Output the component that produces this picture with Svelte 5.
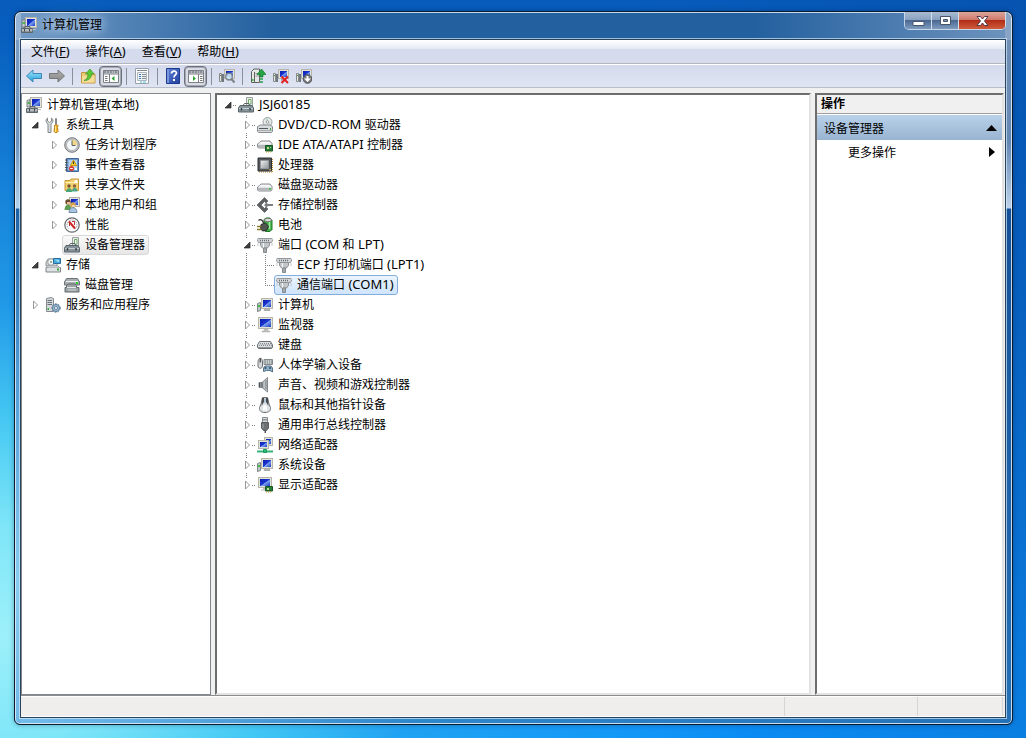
<script lang="ts">
  interface Row {
    id: string;
    label: string;
    icon: string;
    level: number;
    open?: boolean;
    last?: boolean;
  }

  let scopeRows = $state<Row[]>([
    { id: 'root', label: '计算机管理(本地)', icon: 'manage', level: 0 },
    { id: 'tools', label: '系统工具', icon: 'tools', level: 1, open: true },
    { id: 'tasks', label: '任务计划程序', icon: 'clock', level: 2, open: false },
    { id: 'events', label: '事件查看器', icon: 'events', level: 2, open: false },
    { id: 'shares', label: '共享文件夹', icon: 'shares', level: 2, open: false },
    { id: 'users', label: '本地用户和组', icon: 'users', level: 2, open: false },
    { id: 'perf', label: '性能', icon: 'perf', level: 2, open: false },
    { id: 'devmgmt', label: '设备管理器', icon: 'devices', level: 2 },
    { id: 'storage', label: '存储', icon: 'storage', level: 1, open: true },
    { id: 'diskmgmt', label: '磁盘管理', icon: 'diskmgmt', level: 2 },
    { id: 'services', label: '服务和应用程序', icon: 'services', level: 1, open: false }
  ]);

  let deviceRows = $state<Row[]>([
    { id: 'host', label: 'JSJ60185', icon: 'devices', level: 0, open: true },
    { id: 'dvd', label: 'DVD/CD-ROM 驱动器', icon: 'dvd', level: 1, open: false },
    { id: 'ide', label: 'IDE ATA/ATAPI 控制器', icon: 'ide', level: 1, open: false },
    { id: 'cpu', label: '处理器', icon: 'cpu', level: 1, open: false },
    { id: 'disk', label: '磁盘驱动器', icon: 'disk', level: 1, open: false },
    { id: 'storctl', label: '存储控制器', icon: 'storctl', level: 1, open: false },
    { id: 'battery', label: '电池', icon: 'battery', level: 1, open: false },
    { id: 'ports', label: '端口 (COM 和 LPT)', icon: 'port', level: 1, open: true },
    { id: 'lpt1', label: 'ECP 打印机端口 (LPT1)', icon: 'port', level: 2 },
    { id: 'com1', label: '通信端口 (COM1)', icon: 'port', level: 2, last: true },
    { id: 'computer', label: '计算机', icon: 'computer', level: 1, open: false },
    { id: 'monitor', label: '监视器', icon: 'monitor', level: 1, open: false },
    { id: 'keyboard', label: '键盘', icon: 'keyboard', level: 1, open: false },
    { id: 'hid', label: '人体学输入设备', icon: 'hid', level: 1, open: false },
    { id: 'sound', label: '声音、视频和游戏控制器', icon: 'sound', level: 1, open: false },
    { id: 'mouse', label: '鼠标和其他指针设备', icon: 'mouse', level: 1, open: false },
    { id: 'usb', label: '通用串行总线控制器', icon: 'usb', level: 1, open: false },
    { id: 'net', label: '网络适配器', icon: 'net', level: 1, open: false },
    { id: 'system', label: '系统设备', icon: 'computer', level: 1, open: false },
    { id: 'display', label: '显示适配器', icon: 'display', level: 1, open: false, last: true }
  ]);

  let scopeSelected = $state('devmgmt');
  let deviceSelected = $state('com1');
  let actionsOpen = $state(true);

  const menus = [
    { text: '文件', key: 'F' },
    { text: '操作', key: 'A' },
    { text: '查看', key: 'V' },
    { text: '帮助', key: 'H' }
  ];

  const toolbar = [
    [
      { icon: 'back', title: '后退' },
      { icon: 'forward', title: '前进' }
    ],
    [
      { icon: 'folderup', title: '上移一级' },
      { icon: 'treepane', title: '显示/隐藏控制台树', pressed: true }
    ],
    [{ icon: 'props', title: '属性' }],
    [
      { icon: 'help', title: '帮助' },
      { icon: 'actionpane', title: '显示/隐藏操作窗格', pressed: true }
    ],
    [{ icon: 'scan', title: '扫描检测硬件改动' }],
    [
      { icon: 'update', title: '更新驱动程序软件' },
      { icon: 'uninstall', title: '卸载' },
      { icon: 'disable', title: '禁用' }
    ]
  ];

  function screen(x: number, y: number, w: number, h: number): string {
    return (
      `<rect x="${x + 0.5}" y="${y + 0.5}" width="${w - 1}" height="${h - 1}" fill="#e4e3d8" stroke="#b5b5ae"/>` +
      `<rect x="${x + 2}" y="${y + 2}" width="${w - 4}" height="${h - 4}" fill="url(#g-screen)"/>`
    );
  }

  const drive =
    '<path d="M2.500 8.500 4 7h9l2 2.500v3.500l-1 1H1.500l-1-1V10z" fill="#e3e4e6" stroke="#8d8f93"/>' +
    '<path d="M1 11h14v2.500H1z" fill="#b3b6ba"/><path d="M2 9.500 4 8h8l2 1.500z" fill="#fafafa"/>';

  const tower =
    '<path d="M.500 6.500 3.500 5.500V13.500l-3 1z" fill="#c5c9c9" stroke="#7f8585"/><path d="M1 8h2v2H1z" fill="#38c040"/>';

  const smallPc = screen(5, 1, 11, 10) + '<path d="M8 11h5v1.500H8z" fill="#a5a5a0"/>' +
    '<path d="M.500 5.500h2v8h-2z" fill="#e8e8e8" stroke="#888"/><path d="M1 7h1v1H1z" fill="#3a9a4a"/><path d="M4 6v8" stroke="#4d5459" stroke-width="1.500"/>';

  const icons: Record<string, string> = {
    manage:
      screen(4, 0, 12, 11) +
      '<path d="M1 3.500 4 2.500v7.500H1z" fill="#c9cdd0" stroke="#7d8488"/><path d="M1.500 5H4v2H1.500z" fill="#4fae4d"/>' +
      '<path d="M.500 11.500h11v4H.500z" fill="#8e969b" stroke="#5d666b"/><path d="M4 11V9.500h5V11" fill="none" stroke="#5d666b"/><path d="M1 13h10.500" stroke="#dde1e3"/><path d="M3.500 12v2.500M8.500 12v2.500" stroke="#3f474c"/><path d="M12 12h3v1h-3z" fill="#b9b9b0"/>',
    tools:
      '<path d="M2.500 1v3l2 1.500 2-1.500V1c2 1.500 2 4.500-.500 6v8.500H3V7C.500 5.500.500 2.500 2.500 1z" fill="#d5d9db" stroke="#858b8e"/>' +
      '<path d="M10.500 1.500h1v6h-1z" fill="#eee" stroke="#888"/><path d="M9.500 8.500 10 8h2.500l.5.500-.5 2 .5 4-1 1h-2l-1-1 .5-4z" fill="#f4b727" stroke="#bd7d10"/><path d="M10.500 9v6" stroke="#ffe795"/>',
    clock:
      '<circle cx="8" cy="8" r="7.300" fill="#c4c7ca" stroke="#77797c"/><circle cx="8" cy="8" r="5.500" fill="#f5f8fb" stroke="#9ea2a5" stroke-width=".7"/>' +
      '<path d="M8 2.500v5.500h5.300A5.400 5.400 0 0 0 8 2.500z" fill="#f2d68b"/><path d="M8 3.500V8.500h3.500" fill="none" stroke="#5a6064"/>',
    events:
      '<path d="M2.500 1.500h12v13h-12z" fill="#6d98ca" stroke="#44679a"/><path d="M4.500 3h8.500v10H4.500z" fill="#b9d2ec"/><path d="M1 3h2.500M1 5.500h2.500M1 8h2.500M1 10.500h2.500M1 13h2.500" stroke="#4b4f55"/>' +
      '<path d="M9.500 3 12.500 8.500H6.500z" fill="#ffd62c" stroke="#c99908"/><path d="M9.500 4.500v2.500" stroke="#333"/><circle cx="7.500" cy="11.500" r="2.500" fill="#e2352c"/><path d="M6.200 11.500h2.600" stroke="#fff"/><path d="M11 11h2v2h-2z" fill="#fff"/>',
    shares:
      '<path d="M1 3.500h5l1-1.500h7.500v11.500H1z" fill="#f2cf6f" stroke="#c89a35"/><path d="M1.500 5.500H14" stroke="#fff0b3"/><path d="M10.500 3h3v3h-3z" fill="#fff"/>' +
      '<circle cx="5" cy="9" r="1.700" fill="#735537"/><path d="M2 15c0-5 6-5 6 0z" fill="#45a775"/><circle cx="10.500" cy="9" r="1.700" fill="#8a633d"/><path d="M8 14.500c0-5 5.500-5 5.500 0z" fill="#4ea58a"/>',
    users:
      screen(5, 0, 11, 10) + '<circle cx="4" cy="5" r="2.700" fill="#6a4a33"/><path d="M3 5h3v2.500H3z" fill="#e8bd91"/><path d="M.500 13c0-7 7-7 7 0z" fill="#5d9b50"/>' +
      '<circle cx="9" cy="8" r="2.700" fill="#d6a34c"/><path d="M8 8h3v2.500H8z" fill="#f1cfa4"/><path d="M5 15.500c0-6.500 8-6.500 8 0z" fill="#a9c7e2" stroke="#6c8ba6"/>',
    perf:
      '<circle cx="8" cy="8" r="7.200" fill="#fff" stroke="#66696b" stroke-width="1.200"/><path d="M4.500 11.500a5 5 0 1 1 7 0" fill="none" stroke="#7e8589" stroke-dasharray="1 1"/><path d="m5 4.500 6 7" stroke="#d02323" stroke-width="2"/><path d="M5.500 9V5.500M8 4.500h2.500V8" fill="none" stroke="#b83030"/>',
    devices:
      '<path d="M8.500.500h6v10h-6z" fill="#e7eae9" stroke="#9ba19f"/><path d="M10.500 2.500h2.500v4.500h-2.500z" fill="#f6f9f5" stroke="#6bab62"/>' +
      '<path d="M5 8.500 6.500 6.500h4L12 8.500" fill="none" stroke="#596268"/><path d="M2 8.500h12L15.500 11v4H.500v-4z" fill="#87939a" stroke="#59646a"/><path d="M1 11.500h14" stroke="#c8d0d4"/><path d="M3.500 11v2.500M12 11v2.500" stroke="#39444a" stroke-width="1.500"/>',
    storage:
      '<path d="M1 5.500 3 2h7l2 3.500V9H1z" fill="#d3d6d7" stroke="#8a9093"/><circle cx="6" cy="5" r="3.300" fill="#f1f4f1" stroke="#979d9e"/><circle cx="6" cy="5" r="1" fill="#809b83"/>' +
      '<path d="M8.500 1.500h7v5h-7z" fill="#45a9dc" stroke="#2c6e9b"/><path d="M9.500 2.500 14 3v2.500z" fill="#a0e1f8"/><path d="M1 10.500h14.500V15H1z" fill="#dfe2e3" stroke="#7d8588"/><path d="M2 10.500 3.500 9H13l1.500 1.500" fill="#f4f4f4" stroke="#9fa5a7"/><path d="M12 11.500h2v2h-2z" fill="#36af3b"/>',
    diskmgmt:
      '<path d="M2.500 1.500h11l2 3.500v3H.500V5z" fill="#a9afb1" stroke="#6c7376"/><path d="M2 4.500h12" stroke="#edf0f1"/><path d="M12 5h2v2h-2z" fill="#29d52d"/>' +
      '<path d="M2.500 8.500 4 7h7l1.500 1.500v2H15v4.500H1v-4.500h1.500z" fill="#9da5a8" stroke="#60686b"/><path d="M3 10.500h9" stroke="#e4e9ea"/><path d="M4 13h8" stroke="#d1d7d9"/>',
    services:
      '<path d="M1.500 1.500 6 .500 8.500 1.500v13H1.500z" fill="#d4d8da" stroke="#858c90"/><path d="M2.500 3.500h4.500M2.500 5.500h4.500M2.500 7.500h4.500" stroke="#687177"/><path d="M2.500 12h1.500" stroke="#3aad3e" stroke-width="2"/>' +
      '<circle cx="11" cy="11" r="3.600" fill="#9bb9cf" stroke="#5c809d"/><circle cx="11" cy="11" r="4.400" fill="none" stroke="#64859f" stroke-dasharray="1.700 1.500"/><circle cx="11" cy="11" r="1.500" fill="#fff" stroke="#64859f"/>',
    dvd:
      '<circle cx="10.500" cy="5" r="4.500" fill="#e8eaec" stroke="#9b9ea1"/><path d="M10.500 5 8 1.500h3zM10.500 5l3.500 2v1.500z" fill="#b6d8ba"/><circle cx="10.500" cy="5" r="1.300" fill="#fff" stroke="#999"/>' +
      '<path d="M1 9.500 3 8h10l2.500 1.500v5l-1 1H1.500l-1-1v-5z" fill="#d9dcde" stroke="#888c8f"/><path d="M2 11.500h9" stroke="#54585b"/><path d="M1 13.500h14" stroke="#a8acae"/><path d="M13 11h1v2h-1z" fill="#35ae3c"/>',
    ide: '<g transform="translate(0 -3)">' + drive + '</g><path d="M8.500 8.500h7V14h-7z" fill="#277b39" stroke="#175426"/><path d="M10 10h2v2h-2zM13 10h1v1h-1z" fill="#b5dd8f"/><path d="M9 15h6" stroke="#d7a72e" stroke-dasharray="1 1"/>',
    cpu: '<path d="M2 15h13M15.500 2v13" stroke="#bf8a2b" stroke-dasharray="1 1"/><path d="M1 1h13.500v13H1z" fill="#55585b" stroke="#2c2f31"/><path d="M3.500 3.500h8v8h-8z" fill="url(#g-chip)" stroke="#93979a"/><path d="M12.500 12h1.500v1.500h-1.500z" fill="#e2b24c"/>',
    disk: drive + '<path d="M12 11h2v1.500h-2z" fill="#39bd3e"/>',
    storctl: '<path d="M0 8 7.500.500 11 4 9 6 7.500 4.500 4 8l3.500 3.500L9 10l2 2-3.500 3.500z" fill="#5c6063" stroke="#3c4043" stroke-width=".5"/><path d="M7 8 9.500 5.500 11 7h5v2h-5l-1.500 1.500z" fill="#7b7f82"/>',
    battery:
      '<path d="M7 2.500 9 1h4l2 2v9.500l-2 2H8.500L7 13z" fill="#3caf45" stroke="#26762d"/><ellipse cx="11" cy="3" rx="3.500" ry="1.800" fill="#d8dbd8" stroke="#747a75"/><path d="M12.500 5v7" stroke="#a2eda5" stroke-width="1.500"/>' +
      '<path d="M1.500 3.500c2-2 5 0 5 3" fill="none" stroke="#333" stroke-width="1.300"/><path d="M4 7.500 8.500 6l3 3.500-2 4-4 .5-2-3z" fill="#525653" stroke="#2c302d"/><path d="M0 9.500h4M0 12.500h4.500" stroke="#8b7b2c" stroke-width="1.500"/>',
    port:
      '<path d="M1 1.500h14l1 1-1.500 3H1.500L0 2.500z" fill="#d3d6d8" stroke="#96999c"/><path d="M3 3.500h10" stroke="#666c70" stroke-dasharray="1 1" stroke-width="1.500"/><path d="M3.500 5.500h9v3L10.500 11h-5l-2-2.500z" fill="#c3c6c9" stroke="#8d9194"/><path d="M6.500 6v5" stroke="#f6f7f8"/><path d="M6.500 11h3v4.500h-3z" fill="#a6aaad" stroke="#858a8d"/><path d="M1 6v3M15 6v3" stroke="#c3c6c8"/>',
    computer: screen(4, 1, 12, 11) + '<path d="M8 12h4l1 1.500H7z" fill="#bdbdb4" stroke="#aaa"/>' + tower,
    monitor: screen(1, 0, 15, 12) + '<path d="M7 12h4v1.500H7zM5 14h8v1H5z" fill="#c5c5bc" stroke="#aaa" stroke-width=".5"/>',
    keyboard:
      '<path d="M2.500 4.500h11L15.500 8v2.500l-1 1h-13l-1-1V8z" fill="#dcdfe1" stroke="#696e71"/><path d="M3 6.500h11M2 8.500h13" stroke="#85898c" stroke-dasharray="1 1"/><path d="M3.500 7.500H14" stroke="#9ea2a5" stroke-dasharray="1 1"/><path d="M1 10.500h14" stroke="#8e9396"/>',
    hid:
      '<path d="M1 5.500C1 0 5.500 0 5.500 5v4c0 3-4.500 3-4.500 0z" fill="#d6d9db" stroke="#6e7376"/><path d="M3.300 1v4.500" stroke="#555" stroke-width="1.500"/><path d="M7 2.500h8.500v5H7z" fill="#c8cccf" stroke="#83888b"/><path d="M8 4h7M8 6h7" stroke="#72787c" stroke-dasharray="1 1"/>' +
      '<path d="M6.500 14.500V11L8 9h6l1.500 2v4L13 13.500H9.500z" fill="#8eb3ce" stroke="#5a7287"/><circle cx="8.500" cy="11" r="1" fill="#354a5a"/><circle cx="13" cy="11" r="1" fill="#354a5a"/>',
    sound: '<path d="M2 5.500h3L10.500.500V15L5 10.500H2z" fill="url(#g-metal)" stroke="#81878b"/><path d="M5 5.500v5" stroke="#505659"/><path d="M9 3v9.500" stroke="#6b7276"/><path d="M2 6h1v4H2z" fill="#4d5356"/>',
    mouse: '<path d="M5.500.500h5L12 7l1.500 3.500c.5 3-1.500 5-5.500 5s-6-2-5.500-5L4 7z" fill="#dfe2e4" stroke="#6d7275"/><path d="M5 1h2v4L4.500 9zM11 1H9v4l2.500 4z" fill="#4a4e51"/><path d="M8 1.500v4" stroke="#9cb9d2" stroke-width="1.500"/><path d="M6 9.500c1-2 3-2 4 0v4H6z" fill="#fafbfb"/>',
    usb: '<path d="M5.500.500h5v5h-5z" fill="#d5d9db" stroke="#888c8f"/><path d="M7 2v1.500M9 2v1.500" stroke="#555"/><path d="M4.500 5.500h7V11l-2 2.500h-3L4.500 11z" fill="#6e7174" stroke="#5a5d60"/><path d="M6 7v4" stroke="#a4a7aa"/><path d="M7.500 13.500h1.500V16H7.500z" fill="#555"/>',
    net: screen(7, 0, 9, 9) + screen(1, 3, 11, 9) + '<path d="M0 14.500h16" stroke="#31b477" stroke-width="2"/><path d="M6.500 12.500h3v3h-3z" fill="#2bbd70" stroke="#1c9560"/>',
    display: screen(1, 0, 14, 11) + '<path d="M6 11h3v1.500H6z" fill="#bbb"/><path d="M4 13h4" stroke="#bbb"/><path d="M8.500 9.500h7V14h-7z" fill="#277b39" stroke="#175426"/><path d="M10 11h2v2h-2z" fill="#b5dd8f"/><path d="M9 15h6" stroke="#d7a72e" stroke-dasharray="1 1"/>',
    back: '<path d="M.500 8 7 2v3.500h8.500v5H7V14z" fill="url(#g-back)" stroke="#3f87b5"/>',
    forward: '<path d="M15.500 8 9 2v3.500H.500v5H9V14z" fill="url(#g-fwd)" stroke="#777"/>',
    folderup: '<path d="M1.500 4.500h5l1.500 1.500h7v9h-13.500z" fill="#eccb78" stroke="#c09844"/><path d="M2 8h12.500v6.500H2z" fill="#f6dd97"/><path d="M4 12.500c3-1 4-3.500 4-6.500H5.500L10 1l4 5h-2.500c0 4-2.500 6.500-7.500 6.500z" fill="#5cc834" stroke="#36932a" stroke-width=".7"/>',
    treepane: '<path d="M.500 2.500h15v12H.500z" fill="#fff" stroke="#7b8086"/><path d="M1 3h14v2.500H1z" fill="#b8bdc4"/><path d="M1 4h10M12 4h3" stroke="#5f666d" stroke-dasharray="2 1"/><path d="M.500 6h15M6.500 6v8" stroke="#7b8086"/><path d="M2 8.500h3M2 10.500h3M2 12.500h3" stroke="#777" stroke-dasharray="2 .5"/><path d="M11.500 8v5L8.500 10.500z" fill="#28a52c"/>',
    actionpane: '<path d="M.500 2.500h15v12H.500z" fill="#fff" stroke="#7b8086"/><path d="M1 3h14v2.500H1z" fill="#b8bdc4"/><path d="M1 4h10M12 4h3" stroke="#5f666d" stroke-dasharray="2 1"/><path d="M.500 6h15M10.500 6v8" stroke="#7b8086"/><path d="M12 8.500h3M12 10.500h3M12 12.500h3" stroke="#777" stroke-dasharray="2 .5"/><path d="M5 8v5l3-2.500z" fill="#28a52c"/>',
    props: '<path d="M1.500.500h13v15h-13z" fill="#fff" stroke="#9ba1a8"/><path d="M3 2.500h10" stroke="#7e868e"/><path d="M3.500 4.500h9v8h-9z" fill="#eef2f5" stroke="#afb5bc"/><path d="M5 6.500h2M5 8.500h2M5 10.500h2" stroke="#3f78a9"/><path d="M8 6.500h4M8 8.500h4M8 10.500h4" stroke="#868e96"/><path d="M6 14h2M9 14h3" stroke="#42bfe0"/>',
    help: '<path d="M1.500.500h13v15h-13z" fill="url(#g-help)" stroke="#1d3b8d"/><path d="M2 1h2v14H2z" fill="#7895dd"/><path d="M6.500 5.500c0-3 5-3 5-.500 0 2-2.500 2-2.500 4.500" fill="none" stroke="#fff" stroke-width="1.700"/><path d="M8 11h2v2H8z" fill="#fff"/>',
    scan: smallPc + '<circle cx="10" cy="8.500" r="3.300" fill="#c9e5f5" fill-opacity=".85" stroke="#7a8187" stroke-width="1.300"/><path d="m12.500 11 3 3.500" stroke="#7a8187" stroke-width="2"/>',
    update: '<path d="M1.500 3.500 4 1h5.500v13.500h-8z" fill="#e4e7e5" stroke="#5e6561"/><path d="M4.500 4v10.500" stroke="#5e6561"/><path d="M5.500 5.500h4M5.500 8h4" stroke="#929995"/><path d="M2 11h1.500v2H2z" fill="#39b63f"/><path d="M11.500 1 16 6.500h-3V9h-3V6.500H7z" fill="#27a444" stroke="#167a2e" stroke-width=".7"/><path d="M10 11h3M10 14h3" stroke="#27a444" stroke-width="1.700"/>',
    uninstall: smallPc + '<path d="m8.500 8.500 6.500 6.500M15 8.500 8.500 15" stroke="#e32121" stroke-width="2"/>',
    disable: smallPc + '<circle cx="11.500" cy="11" r="4.300" fill="#777b7e" stroke="#4f5356"/><path d="M10.500 8h2v2.500H15L11.500 14 8 10.500h2.500z" fill="#fff"/>'
  };

  // hides everything below a collapsed row
  function visible(rows: Row[]): Row[] {
    const out: Row[] = [];
    let limit = Infinity;
    for (const row of rows) {
      if (row.level > limit) continue;
      limit = row.open === false ? row.level : Infinity;
      out.push(row);
    }
    return out;
  }

  // latin runs are set one size larger than the Chinese text
  function runs(label: string): string[] {
    return label.split(/([\x20-\x7e]+)/).filter(Boolean);
  }

  function isLatin(run: string): boolean {
    return run.charCodeAt(0) < 127;
  }
</script>

{#snippet icon(name: string)}
  <svg class="icon" viewBox="0 0 16 16" aria-hidden="true">{@html icons[name]}</svg>
{/snippet}

{#snippet text(label: string)}
  {#each runs(label) as run}<span class:latin={isLatin(run)}>{run}</span>{/each}
{/snippet}

{#snippet twisty(row: Row)}
  {#if row.open !== undefined}
    <button
      type="button"
      class="twisty"
      aria-label={row.open ? '折叠' : '展开'}
      onclick={() => (row.open = !row.open)}
    >
      <svg viewBox="0 0 9 10" aria-hidden="true">
        {#if row.open}
          <path d="M7 2v6H1z" fill="#404040" stroke="#262626" stroke-width=".7" />
        {:else}
          <path d="M2.500 1v8l4-4z" fill="#fff" stroke="#989898" />
        {/if}
      </svg>
    </button>
  {/if}
{/snippet}

<svg class="defs" width="0" height="0" aria-hidden="true">
  <defs>
    <linearGradient id="g-screen" x1="0" y1="0" x2="1" y2="1">
      <stop offset="0" stop-color="#0a1cae" />
      <stop offset=".5" stop-color="#1c37cf" />
      <stop offset=".55" stop-color="#7ca2f0" />
      <stop offset="1" stop-color="#1a38c4" />
    </linearGradient>
    <linearGradient id="g-chip" x1="0" y1="0" x2="1" y2="1">
      <stop offset="0" stop-color="#f2f3f3" />
      <stop offset="1" stop-color="#8f9395" />
    </linearGradient>
    <linearGradient id="g-metal" x1="0" y1="0" x2="1" y2="0">
      <stop offset="0" stop-color="#7c8388" />
      <stop offset="1" stop-color="#dfe3e5" />
    </linearGradient>
    <linearGradient id="g-back" x1="0" y1="0" x2="0" y2="1">
      <stop offset="0" stop-color="#a9e4fb" />
      <stop offset="1" stop-color="#1ca3dc" />
    </linearGradient>
    <linearGradient id="g-fwd" x1="0" y1="0" x2="0" y2="1">
      <stop offset="0" stop-color="#b0b0b0" />
      <stop offset="1" stop-color="#858585" />
    </linearGradient>
    <linearGradient id="g-help" x1="0" y1="0" x2="1" y2="1">
      <stop offset="0" stop-color="#5f83d8" />
      <stop offset="1" stop-color="#2140a0" />
    </linearGradient>
  </defs>
</svg>

<div class="desktop">
  <div class="window">
    <header class="titlebar">
      {@render icon('manage')}
      <h1>计算机管理</h1>
      <div class="caption-buttons">
        <button type="button" aria-label="最小化">
          <svg width="13" height="12" viewBox="0 0 13 12"><path d="M1 6.500h11v4H1z" fill="#fff" stroke="#48566b" /></svg>
        </button>
        <button type="button" aria-label="最大化">
          <svg width="13" height="12" viewBox="0 0 13 12">
            <path d="M1.500 1.500h10v8h-10z" fill="#fff" stroke="#48566b" />
            <path d="M4.500 4.500h4v2h-4z" fill="#7f95b3" stroke="#48566b" />
          </svg>
        </button>
        <button type="button" class="close" aria-label="关闭">
          <svg width="13" height="12" viewBox="0 0 13 12">
            <path d="M1 1.500h3.500l2 2.500 2-2.500H12L8.500 6l3.500 4.500H8.500l-2-2.500-2 2.500H1L4.500 6z" fill="#fff" stroke="#573a45" />
          </svg>
        </button>
      </div>
    </header>

    <div class="client">
      <nav class="menubar">
        {#each menus as menu}
          <button type="button">{menu.text}<span class="latin">(<u>{menu.key}</u>)</span></button>
        {/each}
      </nav>

      <div class="toolbar" role="toolbar">
        {#each toolbar as group, i}
          {#if i > 0}<span class="separator"></span>{/if}
          {#each group as tool}
            <button type="button" class:pressed={tool.pressed} aria-label={tool.title}>
              {@render icon(tool.icon)}
            </button>
          {/each}
        {/each}
      </div>

      <main class="panes">
        <section class="scope-pane">
          {#each visible(scopeRows) as row (row.id)}
            <div class="row">
              {#each { length: row.level } as _, depth}
                <span class="cell">
                  {#if depth === row.level - 1}{@render twisty(row)}{/if}
                </span>
              {/each}
              <button
                type="button"
                class="item"
                class:current={row.id === scopeSelected}
                onclick={() => (scopeSelected = row.id)}
              >
                {@render icon(row.icon)}<span class="label">{@render text(row.label)}</span>
              </button>
            </div>
          {/each}
        </section>

        <section class="device-pane">
          {#each visible(deviceRows) as row (row.id)}
            <div class="row">
              {#each { length: row.level + 1 } as _, depth}
                <span
                  class="cell"
                  class:trunk={depth > 0}
                  class:end={depth === row.level && row.last}
                  class:branch={depth === row.level}
                >
                  {#if depth === row.level}{@render twisty(row)}{/if}
                </span>
              {/each}
              <button
                type="button"
                class="item"
                class:selected={row.id === deviceSelected}
                onclick={() => (deviceSelected = row.id)}
              >
                {@render icon(row.icon)}<span class="label">{@render text(row.label)}</span>
              </button>
            </div>
          {/each}
        </section>

        <aside class="actions-pane">
          <h2>操作</h2>
          <button type="button" class="group" onclick={() => (actionsOpen = !actionsOpen)}>
            设备管理器
            <svg width="11" height="6" viewBox="0 0 11 6"><path d="M0 6 5.500 0 11 6z" /></svg>
          </button>
          {#if actionsOpen}
            <button type="button" class="action">
              更多操作
              <svg width="6" height="10" viewBox="0 0 6 10"><path d="M0 0v10l6-5z" /></svg>
            </button>
          {/if}
        </aside>
      </main>

      <footer class="statusbar">
        <span></span>
        <span class="short"></span>
        <span class="tail"></span>
      </footer>
    </div>
  </div>
</div>

<style>
  :global(body) {
    margin: 0;
  }

  .defs {
    position: absolute;
  }

  .desktop {
    box-sizing: border-box;
    min-height: 100vh;
    padding: 11px 13px 13px 14px;
    display: flex;
    background:
      radial-gradient(ellipse 760px 600px at 0 86%, #9cf0fa 0, #7fe6f8 18%, rgba(72, 204, 244, 0.95) 36%, rgba(40, 168, 240, 0.75) 55%, rgba(16, 140, 240, 0) 100%),
      linear-gradient(to right, rgba(0, 60, 140, 0) 60%, rgba(0, 50, 130, 0.2)),
      linear-gradient(#075cbc, #0a6bcc 40%, #0c92fa);
    font-family: 'Noto Sans', 'Noto Sans CJK SC', sans-serif;
    font-size: 12px;
    color: #000;
  }

  button {
    margin: 0;
    padding: 0;
    border: none;
    background: none;
    font: inherit;
    color: inherit;
    text-align: left;
  }

  .latin {
    font-size: 13px;
    line-height: 0;
  }

  .icon {
    width: 16px;
    height: 16px;
    flex: none;
    display: block;
  }

  .window {
    flex: 1;
    min-width: 0;
    display: flex;
    flex-direction: column;
    border: 1px solid #0d1b2b;
    border-radius: 7px 7px 6px 6px;
    padding: 0 6px 6px 5px;
    box-shadow:
      inset 0 0 0 1px rgba(225, 240, 252, 0.85),
      0 0 5px rgba(0, 20, 60, 0.35);
    background:
      linear-gradient(to right, rgba(170, 195, 222, 0.6), rgba(60, 110, 165, 0) 26%, rgba(60, 110, 165, 0) 74%, rgba(150, 175, 205, 0.65)) top / 100% 28px no-repeat,
      linear-gradient(#7b9dc4 28px, #6f95c0 130px, #b5d2ea 196px, #1e62a6 197px, #4e9bd6 50%, #86ccf2 80%, #6fb7e6) left / 6px 100% no-repeat,
      linear-gradient(#7390b5 28px, #6488b5 130px, #bdd2e8 196px, #14509a 197px, #2471b8 100%) right / 7px 100% no-repeat,
      linear-gradient(to right, #74bdec, #2e87cb 40%, #2471b8) bottom / 100% 7px no-repeat,
      #23609f;
  }

  .titlebar {
    box-sizing: border-box;
    height: 27px;
    display: flex;
    align-items: center;
    gap: 5px;
    padding: 0 0 2px 1px;
  }

  h1 {
    flex: 1;
    margin: 0;
    font-size: 12px;
    line-height: 16px;
    font-weight: 400;
    text-shadow:
      0 0 8px #d6e6f5,
      0 0 14px #c2d8ee;
  }

  .caption-buttons {
    align-self: flex-start;
    display: flex;
    box-sizing: border-box;
    height: 18px;
    border: 1px solid rgba(225, 236, 248, 0.8);
    border-top: none;
    border-radius: 0 0 5px 5px;
    overflow: hidden;
  }

  .caption-buttons button {
    width: 27px;
    display: grid;
    place-items: center;
    border-right: 1px solid #d2dfec;
    background: linear-gradient(#a9bbd2, #8aa2c0 45%, #4a6892 50%, #7f9cbf);
  }

  .caption-buttons .close {
    width: 46px;
    border-right: none;
    background: linear-gradient(#dba69c, #cf7a6b 45%, #b12d17 50%, #cf5d3d);
  }

  .client {
    flex: 1;
    display: flex;
    flex-direction: column;
    border: 1px solid #27455f;
    background: #f0f0f0;
    box-shadow: 0 0 0 1px rgba(215, 232, 245, 0.7);
  }

  .menubar {
    display: flex;
    height: 23px;
    padding-left: 2px;
    border-bottom: 1px solid #b4b6bd;
    background: linear-gradient(#fff, #e5eaf5 38%, #d4dbed 40%, #d6dcee);
  }

  .menubar button {
    padding: 0 8px;
    line-height: 22px;
  }

  .toolbar {
    display: flex;
    align-items: center;
    height: 22px;
    padding: 0 1px;
    border-top: 1px solid #fff;
    border-bottom: 1px solid #b9bdca;
    background: linear-gradient(#d4daec, #e0e5f4);
  }

  .toolbar button {
    box-sizing: border-box;
    width: 23px;
    height: 21px;
    display: grid;
    place-items: center;
  }

  .toolbar .pressed {
    border: 1px solid #6b7079;
    border-radius: 4px;
    background: #d9dce4;
    box-shadow: inset 0 0 0 1px #a4a9b3;
  }

  .separator {
    width: 1px;
    height: 17px;
    margin: 0 3px 0 4px;
    background: #8a8f9a;
  }

  .panes {
    flex: 1;
    display: grid;
    grid-template-columns: 190px minmax(0, 1fr) 189px;
    gap: 4px;
    padding: 5px 1px 0 0;
  }

  .scope-pane {
    border: 1px solid #828790;
    background: #fff;
    padding: 1px 4px;
  }

  .device-pane,
  .actions-pane {
    border: 2px solid;
    border-color: #6d6d6d #e3e3e3 #e3e3e3 #6d6d6d;
    background: #fff;
  }

  .device-pane {
    padding: 0 2px;
  }

  .row {
    display: flex;
    height: 20px;
  }

  .cell {
    width: 19px;
    flex: none;
    display: grid;
    place-items: center;
    background-repeat: no-repeat;
  }

  .trunk {
    background-image: repeating-linear-gradient(#808080 0 1px, transparent 1px 2px);
    background-size: 1px 100%;
    background-position: 8px 0;
  }

  .device-pane .branch {
    background-image: repeating-linear-gradient(to right, #808080 0 1px, transparent 1px 2px);
    background-size: 10px 1px;
    background-position: 8px 10px;
  }

  .device-pane .trunk.branch {
    background-image:
      repeating-linear-gradient(#808080 0 1px, transparent 1px 2px),
      repeating-linear-gradient(to right, #808080 0 1px, transparent 1px 2px);
    background-size:
      1px 100%,
      10px 1px;
    background-position:
      8px 0,
      8px 10px;
  }

  .device-pane .trunk.end {
    background-size:
      1px 11px,
      10px 1px;
  }

  .twisty {
    width: 9px;
    height: 14px;
    display: grid;
    place-items: center;
    background: #fff;
  }

  .twisty svg {
    display: block;
    width: 9px;
    height: 10px;
  }

  .item {
    display: flex;
    align-items: center;
    box-sizing: border-box;
    height: 20px;
    margin-left: -2px;
    padding: 0 3px 0 1px;
    border: 1px solid transparent;
    border-radius: 3px;
    white-space: nowrap;
  }

  .label {
    padding-left: 5px;
    line-height: 18px;
  }

  .current {
    border-color: #d9d9d9;
    background: linear-gradient(#fafafa, #e6e6e6);
  }

  .selected {
    border-color: #84acdd;
    background: linear-gradient(#ebf4fe, #cfe4fd);
  }

  h2 {
    margin: 0;
    padding: 0 4px;
    border-bottom: 1px solid #a0a0a0;
    background: #f0f0f0;
    font-size: 12px;
    line-height: 18px;
  }

  .group,
  .action {
    box-sizing: border-box;
    width: 100%;
    display: flex;
    align-items: center;
    justify-content: space-between;
  }

  .group {
    height: 26px;
    padding: 0 5px 0 7px;
    border-top: 1px solid #fff;
    background: linear-gradient(#b9d1ea, #99b4d1);
  }

  .action {
    height: 24px;
    padding: 0 7px 0 31px;
  }

  .statusbar {
    display: flex;
    height: 19px;
    padding: 1px 2px 0 0;
    border-top: 1px solid #8b8d91;
    border-bottom: 1px solid #fff;
    background: #f0eded;
    box-shadow: inset 0 1px #fff;
  }

  .statusbar span {
    flex: 1;
    border-right: 1px solid #d7d4d4;
  }

  .statusbar .short {
    flex: none;
    width: 132px;
  }

  .statusbar .tail {
    flex: none;
    width: 84px;
  }
</style>
